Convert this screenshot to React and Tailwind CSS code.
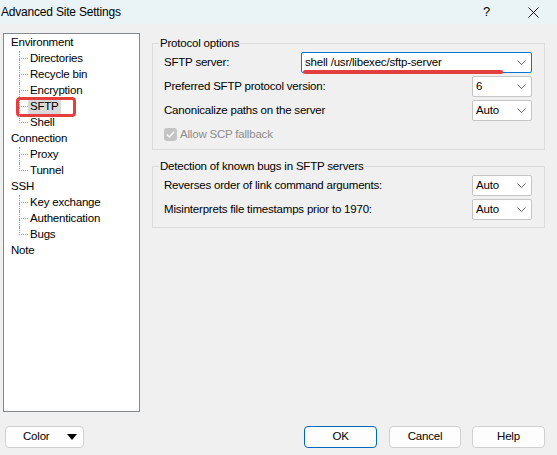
import React from 'react'

const font = { fontFamily: '"Liberation Sans", Arial, sans-serif', letterSpacing: '-0.2px' }

function Chevron() {
  return (
    <svg width="9" height="5" viewBox="0 0 9 5" className="shrink-0">
      <polyline points="0.5,0.5 4.5,4.5 8.5,0.5" fill="none" stroke="#606060" strokeWidth="1" />
    </svg>
  )
}

function Combo({ value, width, focused, children }) {
  return (
    <div
      className={`relative flex h-[21px] items-center justify-between rounded-[2px] border bg-white pl-[3px] pr-[5px] ${
        focused ? 'border-[#0078d4]' : 'border-[#c5c5c5]'
      } ${width}`}
    >
      <span className="text-black">{value}</span>
      <Chevron />
      {children}
    </div>
  )
}

function Child({ text, last, selected }) {
  return (
    <div className="relative flex h-4 items-stretch">
      <div className="ml-[15px] flex w-[9px] flex-col">
        <div className="h-[8px] border-b border-l border-dotted border-[#a0a0a0]" />
        <div className={`h-[8px] ${last ? '' : 'border-l border-dotted border-[#a0a0a0]'}`} />
      </div>
      <span className={`flex items-center px-[2px] ${selected ? 'bg-[#d9d9d9]' : ''}`}>{text}</span>
      {selected && (
        <div className="absolute left-[12px] top-[-2px] h-[20px] w-[60px] rounded-[4px] border-[3px] border-[#e53e3e]" />
      )}
    </div>
  )
}

function Parent({ text }) {
  return <div className="flex h-4 items-center pl-[7px]">{text}</div>
}

function Row({ label, children }) {
  return (
    <div className="flex h-[21px] items-center justify-between">
      <span>{label}</span>
      {children}
    </div>
  )
}

function Button({ children, primary, width }) {
  return (
    <div
      className={`flex h-[22px] items-center justify-center rounded-[4px] border bg-[#fdfdfd] ${
        primary ? 'border-[#0067c0]' : 'border-[#d0d0d0]'
      } ${width}`}
    >
      {children}
    </div>
  )
}

export default function App() {
  return (
    <div className="flex h-[455px] w-[557px] flex-col overflow-hidden bg-[#f0f0f0] text-[11.5px] text-black" style={font}>
      <div className="flex h-[24px] shrink-0 items-center justify-between bg-[#eaf4f6]">
        <span className="pl-[1px] text-[12px]">Advanced Site Settings</span>
        <div className="flex items-center">
          <span className="mr-[38px] text-[13px]">?</span>
          <svg width="11" height="11" viewBox="0 0 11 11" className="mr-[18px]">
            <path d="M0.5 0.5 L10.5 10.5 M10.5 0.5 L0.5 10.5" stroke="#1a1a1a" strokeWidth="1" />
          </svg>
        </div>
      </div>

      <div className="flex pl-[3px] pt-[9px]">
        <div className="h-[379px] w-[137px] shrink-0 border border-[#828790] bg-white pt-[1px]">
          <Parent text="Environment" />
          <Child text="Directories" />
          <Child text="Recycle bin" />
          <Child text="Encryption" />
          <Child text="SFTP" selected />
          <Child text="Shell" last />
          <Parent text="Connection" />
          <Child text="Proxy" />
          <Child text="Tunnel" last />
          <Parent text="SSH" />
          <Child text="Key exchange" />
          <Child text="Authentication" />
          <Child text="Bugs" last />
          <Parent text="Note" />
        </div>

        <div className="ml-[12px] mt-[2px] flex w-[393px] flex-col">
          <fieldset className="border border-[#dcdcdc] pb-[4px] pt-[1px]">
            <legend className="ml-[6px] px-[1px] leading-[16px]">Protocol options</legend>
            <div className="flex flex-col gap-[3px] pl-[11px] pr-[12px]">
              <Row label="SFTP server:">
                <Combo value="shell /usr/libexec/sftp-server" width="w-[231px]" focused>
                  <div className="absolute left-[1px] top-[17px] h-[4px] w-[200px] rounded-full bg-[#e53e3e]" />
                </Combo>
              </Row>
              <Row label="Preferred SFTP protocol version:">
                <Combo value="6" width="w-[60px]" />
              </Row>
              <Row label="Canonicalize paths on the server">
                <Combo value="Auto" width="w-[60px]" />
              </Row>
              <div className="flex h-[21px] items-center">
                <div className="flex h-[13px] w-[13px] items-center justify-center rounded-[3px] bg-[#c4c4c4]">
                  <svg width="9" height="7" viewBox="0 0 9 7">
                    <polyline points="0.8,3.5 3.3,6 8.2,0.8" fill="none" stroke="#ffffff" strokeWidth="1.3" />
                  </svg>
                </div>
                <span className="ml-[3px] text-[#8d8d8d]">Allow SCP fallback</span>
              </div>
            </div>
          </fieldset>

          <fieldset className="mt-[8px] border border-[#dcdcdc] pb-[7px] pt-[1px]">
            <legend className="ml-[6px] px-[1px] leading-[16px]">Detection of known bugs in SFTP servers</legend>
            <div className="flex flex-col gap-[3px] pl-[11px] pr-[12px]">
              <Row label="Reverses order of link command arguments:">
                <Combo value="Auto" width="w-[60px]" />
              </Row>
              <Row label="Misinterprets file timestamps prior to 1970:">
                <Combo value="Auto" width="w-[60px]" />
              </Row>
            </div>
          </fieldset>
        </div>
      </div>

      <div className="mt-[14px] flex items-center pl-[5px] pr-[12px]">
        <div className="flex h-[22px] w-[79px] items-center rounded-[4px] border border-[#d0d0d0] bg-[#fdfdfd]">
          <span className="ml-[17px]">Color</span>
          <svg width="10" height="6" viewBox="0 0 10 6" className="ml-[18px] shrink-0">
            <polygon points="0,0 10,0 5,6" fill="#000000" />
          </svg>
        </div>
        <div className="flex-1" />
        <Button primary width="w-[73px]">OK</Button>
        <div className="w-[12px]" />
        <Button width="w-[72px]">Cancel</Button>
        <div className="w-[11px]" />
        <Button width="w-[73px]">Help</Button>
      </div>
    </div>
  )
}
